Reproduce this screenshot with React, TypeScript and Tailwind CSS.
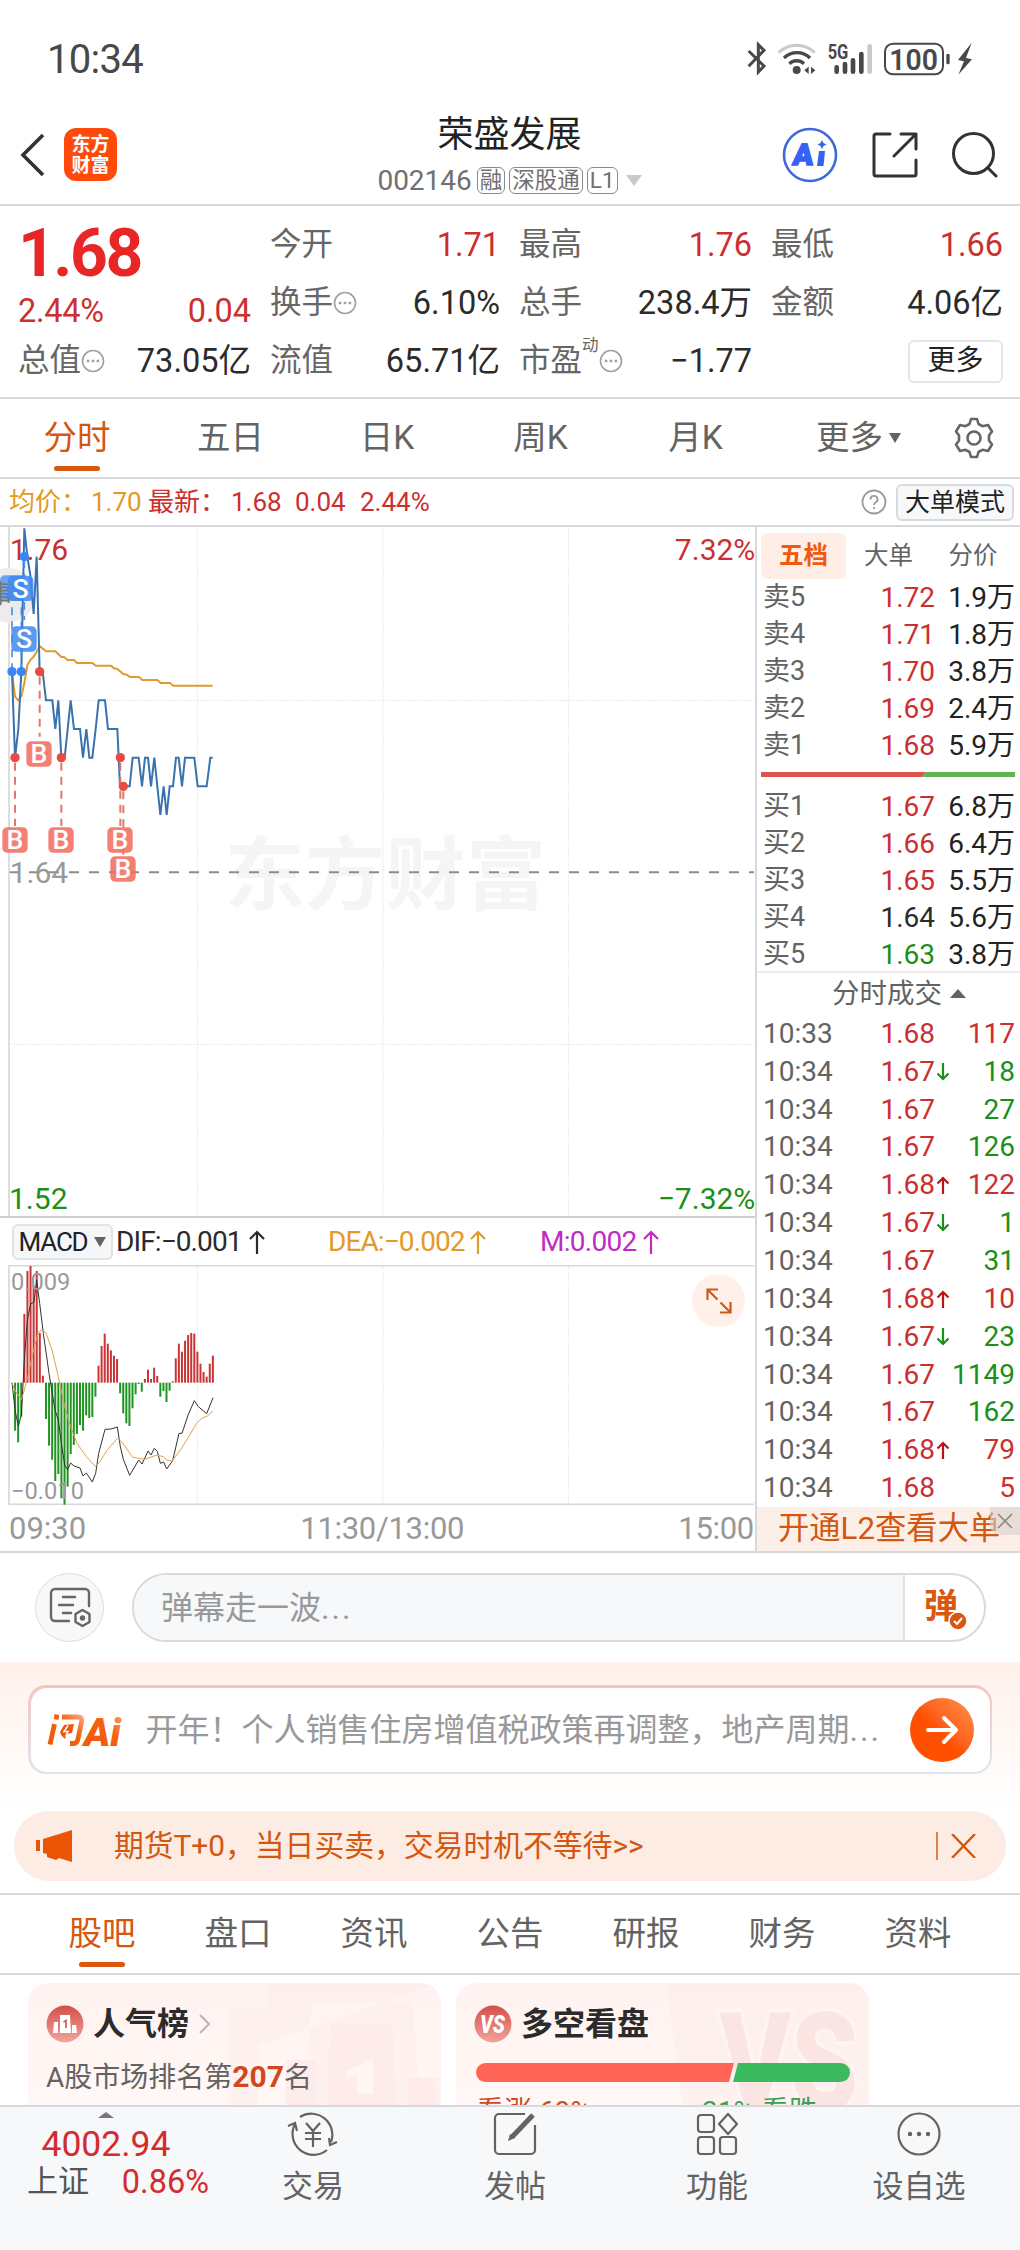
import React from "react";
import { clsx } from "clsx";

const RED = "text-[#cb2f2f]";
const GREEN = "text-[#1a8f1a]";
const DARK = "text-[#2b2b2b]";

const SELL = [
  ["卖5", "1.72", "1.9万"],
  ["卖4", "1.71", "1.8万"],
  ["卖3", "1.70", "3.8万"],
  ["卖2", "1.69", "2.4万"],
  ["卖1", "1.68", "5.9万"],
];

const BUY = [
  ["买1", "1.67", "6.8万"],
  ["买2", "1.66", "6.4万"],
  ["买3", "1.65", "5.5万"],
  ["买4", "1.64", "5.6万"],
  ["买5", "1.63", "3.8万"],
];

// time, price, direction, volume, side
const TRADES = [
  ["10:33", "1.68", "", "117", "b"],
  ["10:34", "1.67", "down", "18", "s"],
  ["10:34", "1.67", "", "27", "s"],
  ["10:34", "1.67", "", "126", "s"],
  ["10:34", "1.68", "up", "122", "b"],
  ["10:34", "1.67", "down", "1", "s"],
  ["10:34", "1.67", "", "31", "s"],
  ["10:34", "1.68", "up", "10", "b"],
  ["10:34", "1.67", "down", "23", "s"],
  ["10:34", "1.67", "", "1149", "s"],
  ["10:34", "1.67", "", "162", "s"],
  ["10:34", "1.68", "up", "79", "b"],
  ["10:34", "1.68", "", "5", "b"],
];

// one value per minute, bars grow from MACD_ZERO
const MACD_ZERO = 608;
const MACD = [
  608, 752, 787, 710, 402, 273, 258, 318, 273, 459, 587, 717, 797, 839, 903, 882, 955, 974, 920, 822, 795, 762, 735,
  752, 706, 714, 711, 650, 557, 498, 461, 491, 511, 527, 537, 640, 700, 730, 738, 685, 643, 612, 635, 597, 569, 597,
  563, 588, 650, 633, 666, 632, 604, 535, 491, 515, 482, 465, 459, 461, 515, 551, 576, 590, 551, 527,
];

const PRICE_LINE =
  "36,455 45,713 55,627 64,455 73,25 82,110 91,165 101,282 110,110 119,455 128,455 138,541 157,541 166,627 175,541 184,713 194,713 203,627 212,541 222,627 240,627 249,713 259,627 268,713 277,713 287,627 296,541 315,541 324,627 352,627 360,799 389,799 398,713 416,713 426,799 435,713 444,713 453,799 463,713 481,885 491,799 500,885 509,799 519,799 528,713 536,713 546,799 555,713 583,713 593,799 620,799 631,713 638,713";
const AVG_LINE =
  "36,455 45,530 55,541 64,530 73,490 82,435 91,420 101,410 110,395 119,378 138,394 166,394 184,411 192,411 203,420 222,420 231,429 277,429 287,437 333,437 342,445 351,446 370,462 380,464 390,471 417,471 427,480 472,480 482,489 510,489 520,497 638,497";
const DIF_LINE =
  "36,608 45,690 55,738 64,705 73,540 82,420 92,372 102,366 110,300 119,370 130,460 147,580 165,690 175,720 184,790 194,855 203,869 212,849 222,858 240,864 249,888 259,879 277,906 287,880 296,820 315,748 333,747 352,741 361,800 370,838 389,886 416,840 426,852 444,813 453,825 463,805 472,814 481,850 491,846 500,867 518,842 537,760 546,760 565,703 583,662 595,680 620,701 639,653";
const DEA_LINE =
  "36,608 45,632 64,659 73,630 82,595 101,510 115,456 126,450 138,459 156,510 175,590 194,680 212,740 231,790 259,830 287,860 300,845 320,812 352,775 365,785 398,832 435,838 470,825 490,830 500,840 516,843 546,803 590,730 605,715 622,708 639,693";

function StatusBar() {
  return (
    <div className="flex h-[120px] items-center justify-between pl-[47px] pr-[46px] text-[#484848]">
      <span className="text-[40px] leading-none tracking-[-0.7px]">10:34</span>
      <svg className="h-[40px] w-[240px]" viewBox="0 8 720 120" fill="none" stroke="#484848" strokeWidth="9">
        <path d="M44 41 90 86 73 104V22l17 17-46 48" />
        <path d="M134 46a76 76 0 0 1 108 0" stroke="#c9c9c9" strokeWidth="9" />
        <path d="M150 62a55 55 0 0 1 78 0M166 79a32 32 0 0 1 44 0" strokeWidth="10" />
        <circle cx="188" cy="98" r="12" fill="#484848" stroke="none" />
        <path d="m224 88v22l-13-11zM231 88v22l13-11z" fill="#484848" stroke="none" />
        <path d="M308 90v13M333 80v23M357 69v34M382 50v53" strokeWidth="14" strokeLinecap="round" />
        <path d="M407 27v76" stroke="#c9c9c9" strokeWidth="14" strokeLinecap="round" />
        <rect x="453" y="19" width="174" height="92" rx="24" strokeWidth="6" />
        <path d="M642 54v22" strokeWidth="10" strokeLinecap="round" />
        <path d="M713 16 672 68l18 4-17 40 41-46-18-4z" fill="#484848" stroke="none" />
        <text x="281" y="64" fontSize="60" fontWeight="700" fill="#484848" stroke="none" textLength="62" lengthAdjust="spacingAndGlyphs">5G</text>
        <text x="466" y="97" fontSize="88" fontWeight="600" fill="#484848" stroke="none" textLength="146" lengthAdjust="spacingAndGlyphs">100</text>
      </svg>
    </div>
  );
}

function Tag({ children }: { children: React.ReactNode }) {
  return (
    <span className="flex h-[27px] items-center rounded-[6px] border-[1.5px] border-[#8a8a8a] px-[2px] text-[22.500px] leading-none">
      {children}
    </span>
  );
}

function Header() {
  return (
    <header className="flex h-[86px] items-center justify-between border-b-2 border-[#d8d8da] pb-[13px] pl-[19px] pr-[22px]">
      <div className="flex w-[218px] items-center gap-[19px] pb-[2px]">
        <svg className="h-[44px] w-[26px]" viewBox="0 0 26 44" fill="none" stroke="#333" strokeWidth="3.6">
          <path d="M24 2 4 22l20 20" />
        </svg>
        <div className="flex h-[53px] w-[53px] flex-col items-center justify-center rounded-[12px] bg-[#ff4a0b] text-[19px] font-bold leading-[21px] text-white">
          <span>东方</span>
          <span>财富</span>
        </div>
      </div>
      <div className="flex flex-col items-center pb-[4px]">
        <h1 className="text-[36px] leading-[44px] text-[#222]">荣盛发展</h1>
        <div className="mt-[10px] flex items-center gap-[4px] text-[#707070]">
          <span className="mr-px text-[28px] leading-[28px]">002146</span>
          <Tag>融</Tag>
          <Tag>深股通</Tag>
          <Tag>L1</Tag>
          <span className="ml-[4px] border-x-[8px] border-t-[11px] border-x-transparent border-t-[#c9c9c9]" />
        </div>
      </div>
      <div className="flex w-[216px] items-center justify-end gap-[34px] pb-[2px]">
        <svg className="h-[56px] w-[56px]" viewBox="0 0 56 56">
          <circle cx="28" cy="28" r="26" fill="none" stroke="#4168d8" strokeWidth="2.6" />
          <text x="11" y="38.500" fontSize="30" fontWeight="900" fill="#3562f5" stroke="#3562f5" strokeWidth="1.500" transform="skewX(-6) translate(3 0)">A</text>
          <path d="M37 24h6l-1.500 15h-6.500z" fill="#3562f5" />
          <path d="m40 13 1.500 3 3 1.500-3 1.500-1.500 3-1.500-3-3-1.500 3-1.500z" fill="#3562f5" />
        </svg>
        <svg className="h-[46px] w-[46px]" viewBox="0 0 46 46" fill="none" stroke="#333" strokeWidth="3" strokeLinecap="round" strokeLinejoin="round">
          <path d="M18 2H4a2 2 0 0 0-2 2v38a2 2 0 0 0 2 2h38a2 2 0 0 0 2-2V28M29 2h15v15M44 2 22 24" />
        </svg>
        <svg className="h-[46px] w-[46px]" viewBox="0 0 46 46" fill="none" stroke="#333" strokeWidth="3" strokeLinecap="round">
          <circle cx="21.500" cy="21.500" r="20" />
          <path d="m36 36 8 8" />
        </svg>
      </div>
    </header>
  );
}

function InfoDots() {
  return (
    <svg className="h-[24px] w-[24px]" viewBox="0 0 24 24" fill="none" stroke="#a0a0a0" strokeWidth="1.600">
      <circle cx="12" cy="12" r="10.500" />
      <path d="M5.800 12h2.600M10.700 12h2.600M15.600 12h2.600" strokeWidth="2.400" />
    </svg>
  );
}

function Stat({ label, value, color = DARK, dots, sup }: { label: string; value: string; color?: string; dots?: boolean; sup?: string }) {
  return (
    <div className="flex h-[58px] items-center justify-between">
      <div className="flex items-center text-[31.500px] leading-none text-[#666]">
        {label}
        {sup && <span className="-mt-[30px] text-[16.500px]">{sup}</span>}
        {dots && <InfoDots />}
      </div>
      <span className={clsx("-mr-[2px] text-[32.500px] leading-none", color)}>{value}</span>
    </div>
  );
}

function Quote() {
  return (
    <section className="grid h-[193px] grid-cols-[231px_228px_231px_230px] gap-x-[21px] border-b-2 border-[#d8d8da] pl-[18px] pt-[10px]">
      <div>
        <div className="flex h-[75px] items-center text-[66px] font-bold leading-none tracking-[-2.500px] text-[#e92626]">1.68</div>
        <div className={clsx("flex h-[41px] items-center justify-between text-[32.500px] leading-none", RED)}>
          <span className="tracking-[-0.300px]">2.44%</span>
          <span className="-mr-[2px]">0.04</span>
        </div>
        <Stat label="总值" value="73.05亿" dots />
      </div>
      <div>
        <Stat label="今开" value="1.71" color={RED} />
        <Stat label="换手" value="6.10%" dots />
        <Stat label="流值" value="65.71亿" />
      </div>
      <div>
        <Stat label="最高" value="1.76" color={RED} />
        <Stat label="总手" value="238.4万" />
        <Stat label="市盈" value="−1.77" sup="动" dots />
      </div>
      <div>
        <Stat label="最低" value="1.66" color={RED} />
        <Stat label="金额" value="4.06亿" />
        <div className="flex h-[58px] items-center justify-end">
          <button className="-mr-[2px] h-[43px] w-[95px] rounded-[6px] border-2 border-[#e6e6e8] text-[28px] leading-none text-[#222]">更多</button>
        </div>
      </div>
    </section>
  );
}

function PeriodTabs() {
  return (
    <nav className="flex h-[80px] items-center border-b-2 border-[#d8d8da] text-[33.500px] leading-none text-[#636363]">
      <div className="relative flex h-full w-[154px] items-center justify-center text-[#d4570f]">
        分时
        <span className="absolute bottom-[6px] h-[5px] w-[46px] rounded-full bg-[#d9570e]" />
      </div>
      <div className="w-[153px] text-center">五日</div>
      <div className="w-[160px] text-center">日K</div>
      <div className="w-[147px] text-center">周K</div>
      <div className="w-[163px] text-center">月K</div>
      <div className="flex w-[163px] items-center justify-center gap-[6px]">
        更多
        <span className="border-x-[6px] border-t-[10px] border-x-transparent border-t-[#636363]" />
      </div>
      <svg className="ml-[13px] h-[42px] w-[42px]" viewBox="0 0 42 42" fill="none" stroke="#666" strokeWidth="2.600" strokeLinejoin="round">
        <path d="M18 2h6l1.500 5 4 2.200 5.500-1.200 4 6.500-3 4v5l3 4-4 6.500-5.500-1.200-4 2.200L24 40h-6l-1.500-5-4-2.200L7 34l-4-6.500 3-4v-5l-3-4L7 8l5.500 1.200 4-2.200z" />
        <circle cx="21" cy="21" r="6.500" />
      </svg>
    </nav>
  );
}

function InfoRow() {
  return (
    <div className="flex h-[48px] items-center border-b-2 border-[#d8d8da] pl-[9px] pr-[6px] text-[26px] leading-none">
      <span className="w-[82px] text-[#e29a22]">均价：</span>
      <span className="w-[57px] text-[#e29a22]">1.70</span>
      <span className={clsx("w-[83px]", RED)}>最新：</span>
      <span className={clsx("w-[64px]", RED)}>1.68</span>
      <span className={clsx("w-[65px]", RED)}>0.04</span>
      <span className={RED}>2.44%</span>
      <svg className="ml-auto h-[26px] w-[26px]" viewBox="0 0 26 26" fill="none" stroke="#999" strokeWidth="1.800">
        <circle cx="13" cy="13" r="11.500" />
        <path d="M9.500 10.500a3.500 3.500 0 1 1 5 3c-1 .6-1.500 1-1.500 2.500M13 18v2" />
      </svg>
      <button className="ml-[9px] h-[37px] w-[118px] rounded-[6px] border-2 border-[#d9dadd] bg-[#f7f8fa] text-[25px] leading-none text-[#222]">大单模式</button>
    </div>
  );
}

function Marker({ x, y, kind }: { x: number; y: number; kind: "B" | "S" }) {
  return (
    <g>
      <rect x={x - 38} y={y - 38} width="76" height="76" rx="14" fill={kind === "B" ? "#f26a5a" : "#3f88ee"} fillOpacity="0.85" />
      <text x={x} y={y + 28} textAnchor="middle" fontSize="80" fontWeight="500" fill="#fff">{kind}</text>
    </g>
  );
}

function PriceChart() {
  return (
    <svg className="block h-[689px] w-[755px]" viewBox="0 21 2265 2067" fill="none">
      <text x="674" y="1148" fontSize="240" fontWeight="700" fill="#f5f5f6" textLength="964">东方财富</text>
      <g stroke="#dcdcdc" strokeWidth="3" strokeDasharray="3 4">
        <path d="M592 18v2073M1149 18v2073M1705 18v2073M27 541h2235M27 1573h2235" />
      </g>
      <path d="M27 1057h2235" stroke="#8c8c8c" strokeWidth="6" strokeDasharray="30 30" />
      <path d="M27 18v2073" stroke="#d8d8da" strokeWidth="5" />
      <circle cx="25" cy="226" r="82" fill="#ececec" />
      <g fontSize="90">
        <text x="29" y="119" fill="#cb2f2f">1.76</text>
        <text x="2266" y="119" fill="#cb2f2f" textAnchor="end">7.32%</text>
        <text x="29" y="1090" fill="#999">1.64</text>
        <text x="27" y="2066" fill="#1a8f1a">1.52</text>
        <text x="2266" y="2066" fill="#1a8f1a" textAnchor="end">−7.32%</text>
      </g>
      <polyline points={AVG_LINE} stroke="#e09a2c" strokeWidth="6" />
      <polyline points={PRICE_LINE} stroke="#3a72ae" strokeWidth="6" />
      <g stroke="#4a90f0" strokeWidth="5" strokeDasharray="24 18">
        <path d="M36 262v190M64 262v190M73 120v180" />
      </g>
      <g stroke="#e2776b" strokeWidth="6" strokeDasharray="24 18">
        <path d="M119 470v180M45 728v190M184 728v190M361 728v190M370 814v190" />
      </g>
      <g fill="#ea4a3f">
        <circle cx="119" cy="455" r="14" />
        <circle cx="45" cy="713" r="14" />
        <circle cx="184" cy="713" r="14" />
        <circle cx="361" cy="713" r="14" />
        <circle cx="370" cy="799" r="14" />
      </g>
      <g fill="#3a86f4">
        <circle cx="36" cy="455" r="14" />
        <circle cx="64" cy="455" r="14" />
        <circle cx="73" cy="110" r="14" />
      </g>
      <rect x="0" y="166" width="76" height="76" rx="14" fill="#4a90f0" fillOpacity="0.8" />
      <text x="-36" y="250" fontSize="76" fill="#777">事</text>
      <Marker x={62} y={205} kind="S" />
      <Marker x={72} y={357} kind="S" />
      <Marker x={45} y={960} kind="B" />
      <Marker x={117} y={702} kind="B" />
      <Marker x={183} y={960} kind="B" />
      <Marker x={360} y={960} kind="B" />
      <Marker x={369} y={1047} kind="B" />
    </svg>
  );
}

function ArrowUp() {
  return (
    <svg className="h-[24px] w-[16px]" viewBox="0 0 16 24" fill="none" stroke="currentColor" strokeWidth="2.200">
      <path d="M8 24V2M1 9l7-7 7 7" />
    </svg>
  );
}

function MacdPanel() {
  return (
    <>
      <div className="flex h-[49px] items-center border-t-2 border-[#d0d0d2] pl-[12px] text-[28px] leading-none">
        <div className="flex h-[36px] w-[101px] items-center justify-center gap-[7px] rounded-[6px] border-2 border-[#e2e3e6] bg-[#f6f7f9] text-[26px] tracking-[-1.200px] text-[#222]">
          MACD
          <span className="border-x-[6px] border-t-[10px] border-x-transparent border-t-[#636363]" />
        </div>
        <div className="ml-[3px] flex w-[212px] items-center gap-[7px] tracking-[-0.900px] text-[#2b2b2b]">DIF:−0.001<ArrowUp /></div>
        <div className="flex w-[212px] items-center gap-[5px] tracking-[-0.900px] text-[#e29a2c]">DEA:−0.002<ArrowUp /></div>
        <div className="flex items-center gap-[6px] tracking-[-0.700px] text-[#c02bc4]">M:0.002<ArrowUp /></div>
      </div>
      <div className="relative">
        <svg className="block h-[240px] w-[755px]" viewBox="0 255 2265 720" fill="none">
          <path d="M27 257h2235M27 973h2235" stroke="#d8d8da" strokeWidth="5" />
          <path d="M27 255v720" stroke="#d8d8da" strokeWidth="5" />
          <path d="M592 255v720M1149 255v720M1705 255v720" stroke="#dcdcdc" strokeWidth="3" strokeDasharray="3 4" />
          {MACD.map((y, i) => (
            <rect key={i} x={33 + i * 9.27} y={Math.min(y, MACD_ZERO)} width="6" height={Math.abs(y - MACD_ZERO)} fill={y < MACD_ZERO ? "#c93434" : "#1f9420"} />
          ))}
          <polyline points={DIF_LINE} stroke="#333" strokeWidth="3" />
          <polyline points={DEA_LINE} stroke="#e2a04a" strokeWidth="3" />
          <g fontSize="71" fill="#999">
            <text x="33" y="330">0.009</text>
            <text x="33" y="957">−0.010</text>
          </g>
        </svg>
        <button className="absolute right-[10px] top-[9px] flex h-[53px] w-[53px] items-center justify-center rounded-full bg-[#fff1ea]">
          <svg className="h-[26px] w-[26px]" viewBox="0 0 26 26" fill="none" stroke="#d05a18" strokeWidth="2.200">
            <path d="M12 1.500H1.500V12M1.500 1.500l10 10M14 24.500h10.500V14M24.500 24.500l-10-10" />
          </svg>
        </button>
      </div>
      <div className="flex h-[46px] items-center justify-between pl-[9px] pr-px text-[31px] leading-none text-[#999]">
        <span>09:30</span>
        <span className="tracking-[-0.300px]">11:30/13:00</span>
        <span className="tracking-[-0.300px]">15:00</span>
      </div>
    </>
  );
}

function BookRow({ row }: { row: string[] }) {
  const [label, price, volume] = row;
  const color = price === "1.64" ? DARK : Number(price) > 1.64 ? RED : GREEN;
  return (
    <div className="flex h-[37px] items-center pl-[6px] pr-[5px] text-[28px] leading-none">
      <span className="w-[116px] text-[27px] text-[#636363]">{label}</span>
      <span className={clsx("w-[56px] text-right", color)}>{price}</span>
      <span className="ml-auto text-[#222]">{volume}</span>
    </div>
  );
}

function TradeRow({ row }: { row: string[] }) {
  const [time, price, dir, volume, side] = row;
  return (
    <div className="flex h-[37.850px] items-center pl-[6px] pr-[5px] text-[28px] leading-none">
      <span className="w-[116px] text-[#636363]">{time}</span>
      <span className={clsx("w-[56px] text-right", RED)}>{price}</span>
      {dir && (
        <svg className={clsx("ml-px h-[18px] w-[14px]", dir === "up" ? "text-[#b81414]" : GREEN)} viewBox="0 0 14 18" fill="none" stroke="currentColor" strokeWidth="2.200">
          <path d={dir === "up" ? "M7 18V2M1.500 7.500 7 2l5.500 5.500" : "M7 0v16M1.500 10.500 7 16l5.500-5.500"} />
        </svg>
      )}
      <span className={clsx("ml-auto", side === "b" ? RED : GREEN)}>{volume}</span>
    </div>
  );
}

function OrderBook() {
  return (
    <aside className="flex h-[1024px] w-[265px] flex-col border-l-2 border-[#d8d8da]">
      <div className="flex h-[52px] shrink-0 items-end pl-[4px] text-[24.500px] leading-none text-[#636363]">
        <div className="flex h-[46px] w-[85px] items-center justify-center rounded-[6px] bg-[#ffeee6] font-bold text-[#ee5a10]">五档</div>
        <div className="flex h-[46px] w-[85px] items-center justify-center">大单</div>
        <div className="flex h-[46px] w-[84px] items-center justify-center">分价</div>
      </div>
      <div>{SELL.map((r) => <BookRow key={r[0]} row={r} />)}</div>
      <svg className="ml-[4px] mt-[8px] h-[5px] w-[254px] shrink-0" viewBox="0 0 254 5">
        <path d="M0 0h165l-4 5H0z" fill="#d9534f" />
        <path d="M165 0h89v5h-93z" fill="#60b453" />
      </svg>
      <div className="mt-[11px] h-[185px] shrink-0 border-b-2 border-[#ececee]">{BUY.map((r) => <BookRow key={r[0]} row={r} />)}</div>
      <div className="flex h-[41px] shrink-0 items-center justify-center gap-[8px] pl-[21px] text-[27.500px] leading-none text-[#636363]">
        分时成交
        <span className="border-x-[8px] border-b-[9px] border-x-transparent border-b-[#636363]" />
      </div>
      <div className="pt-px">{TRADES.map((r, i) => <TradeRow key={i} row={r} />)}</div>
      <div className="relative mt-auto flex h-[44px] shrink-0 items-center bg-[#fcefe8] pl-[21px] text-[31.300px] leading-none text-[#d4570f]">
        开通L2查看大单
        <span className="absolute right-0 top-0 flex h-[28px] w-[30px] items-center justify-center rounded-bl-[10px] bg-[#d9cfca]/60">
          <svg className="h-[16px] w-[16px]" viewBox="0 0 16 16" stroke="#8d8885" strokeWidth="1.600">
            <path d="m1 1 14 14M15 1 1 15" />
          </svg>
        </span>
      </div>
    </aside>
  );
}

function Danmaku() {
  return (
    <div className="flex h-[111px] items-center border-t-2 border-[#d8d8da] pl-[35px]">
      <div className="flex h-[69px] w-[69px] items-center justify-center rounded-full border-[1.5px] border-[#dcdde0] bg-[#f7f8fa]">
        <svg className="h-[42px] w-[42px]" viewBox="0 0 42 42" fill="none" stroke="#666" strokeWidth="2.400" strokeLinecap="round">
          <path d="M20 34H6a4 4 0 0 1-4-4V6a4 4 0 0 1 4-4h30a4 4 0 0 1 4 4v13" />
          <path d="M14 10h12M10 18h14M14 26h8" />
          <path d="m33.500 23 7 4v8l-7 4-7-4v-8z" strokeLinejoin="round" />
          <circle cx="33.500" cy="31" r="1.500" fill="#666" />
        </svg>
      </div>
      <div className="ml-[28px] flex h-[69px] w-[854px] overflow-hidden rounded-full border-2 border-[#d9dadd] bg-white">
        <div className="flex flex-1 items-center bg-[#f7f8fa] pl-[27px] text-[32px] leading-none text-[#999]">
          弹幕走一波<span className="tracking-[2px]">...</span>
        </div>
        <div className="relative w-[81px] border-l-2 border-[#e0e1e4] pl-[19px] text-[34px] font-bold leading-[62px] text-[#d9570e]">
          弹
          <svg className="absolute left-[43px] top-[36px] h-[20px] w-[20px]" viewBox="0 0 20 20" fill="none">
            <circle cx="10" cy="10" r="9" fill="#d9570e" stroke="#fff" strokeWidth="1.500" />
            <path d="m6 10 3 3 5-6" stroke="#fff" strokeWidth="2" />
          </svg>
        </div>
      </div>
    </div>
  );
}

function AskAi() {
  return (
    <div className="h-[149px] bg-linear-to-b from-[#fff1eb] to-white px-[28px] pt-[23px]">
      <div className="h-[89px] rounded-[18px] bg-linear-to-b from-[#f3c6be] to-[#dfe4f0] p-[2.500px]">
        <div className="flex h-full items-center rounded-[16px] bg-white pl-[15px] pr-[16px]">
          <svg className="h-[40px] w-[80px] overflow-visible" viewBox="0 0 80 40">
            <defs>
              <linearGradient id="ask" x1="0" x2="1" y1="1" y2="0">
                <stop offset="0" stopColor="#f4570a" />
                <stop offset="0.6" stopColor="#f2600f" />
                <stop offset="1" stopColor="#ffa37e" />
              </linearGradient>
            </defs>
            <g fill="none" stroke="url(#ask)" strokeWidth="4.800">
              <path d="M8.500 14 4 34.500M11 4.500l-1 5M16 7h16q4.500 0 3.500 5l-3.500 17q-1 4.500-4 4.500h-4" />
            </g>
            <path d="m18 15 10-1-2 9-5 1-2 5-4-4-1-3z" fill="#f4570a" />
            <path d="m22 15.500-4 6h4l-2.500 5" fill="none" stroke="#fff" strokeWidth="1.500" />
            <text x="38" y="35.500" fontSize="39" fontWeight="900" fontStyle="italic" fill="url(#ask)" textLength="37" lengthAdjust="spacingAndGlyphs">Ai</text>
          </svg>
          <span className="ml-[20px] flex-1 whitespace-nowrap text-[32px] leading-none text-[#999]">
            开年！个人销售住房增值税政策再调整，地产周期<span className="tracking-[2px]">...</span>
          </span>
          <div className="flex h-[64px] w-[64px] items-center justify-center rounded-full bg-linear-to-tr from-[#ff5000] from-45% to-[#ff9348]">
            <svg className="h-[32px] w-[32px]" viewBox="0 0 32 32" fill="none" stroke="#fff" strokeWidth="4" strokeLinecap="round" strokeLinejoin="round">
              <path d="M2 16h27M18 4l12 12-12 12" />
            </svg>
          </div>
        </div>
      </div>
    </div>
  );
}

function Notice() {
  return (
    <div className="mx-[14px] mb-[12px] flex h-[70px] items-center rounded-full bg-[#fcece3] pl-[22px] pr-[30px] text-[#d4570f]">
      <svg className="h-[32px] w-[36px]" viewBox="0 0 36 32" fill="#e95504">
        <path d="M0 10h4v11H0zM7 9 36 0v32l-13-4-3 2-9-3v-3l-4-1z" />
      </svg>
      <span className="ml-[42px] text-[29.800px] leading-none">期货T+0，当日买卖，交易时机不等待&gt;&gt;</span>
      <span className="ml-auto h-[28px] w-[2px] bg-[#d9824f]" />
      <svg className="ml-[13px] h-[24px] w-[25px]" viewBox="0 0 25 24" stroke="#d4570f" strokeWidth="2.400">
        <path d="m1 0 23 24M24 0 1 24" />
      </svg>
    </div>
  );
}

function ContentTabs() {
  const tabs = ["股吧", "盘口", "资讯", "公告", "研报", "财务", "资料"];
  return (
    <nav className="flex h-[82px] items-center border-y-2 border-[#d8d8da] px-[34px] text-[33.500px] leading-none text-[#636363]">
      {tabs.map((t, i) => (
        <div key={t} className={clsx("relative flex h-full w-[136px] items-center justify-center", i === 0 && "text-[#d4570f]")}>
          {t}
          {i === 0 && <span className="absolute bottom-[6px] h-[5px] w-[46px] rounded-full bg-[#d9570e]" />}
        </div>
      ))}
    </nav>
  );
}

function Cards() {
  return (
    <div className="flex h-[130px] gap-[15px] overflow-hidden pl-[28px] pt-[8px]">
      <div className="relative h-[180px] w-[413px] overflow-hidden rounded-[20px] bg-linear-to-b from-[#fff3f1] to-[#fffaf8] px-[18px] pt-[22px]">
        <svg className="absolute right-0 top-0 h-[180px] w-[213px]" viewBox="0 0 213 180" fill="#fdeceb">
          <path d="M40 0h173v180H0V25h38zM31 62v118h27V77h21l5-58h101l5 75h23V0z" fillOpacity="0.450" fillRule="evenodd" />
          <path d="M102 41h63l6 139H97zM59 77h30l-2 103H55zM180 95h27l6 85h-33z" />
          <path d="M119 88l26-12v35h-16V92l-10 3z" fill="#fff6f4" />
        </svg>
        <div className="relative flex h-[38px] items-center">
          <svg className="h-[38px] w-[38px]" viewBox="0 0 38 38">
            <defs>
              <linearGradient id="badge" x1="0" x2="0" y1="0" y2="1">
                <stop offset="0" stopColor="#d34f4a" />
                <stop offset="1" stopColor="#f2a39c" />
              </linearGradient>
            </defs>
            <circle cx="19" cy="19" r="18.500" fill="url(#badge)" />
            <path d="M8 17h4v11H7zM14 10h10l1 18H14zM26 20h4l1 8h-5z" fill="#fff" />
            <path d="m17.500 17 2.500-1.500V23" stroke="#d9625c" strokeWidth="1.800" fill="none" />
          </svg>
          <h3 className="ml-[9px] text-[32px] font-bold leading-none text-[#2b2b2b]">人气榜</h3>
          <svg className="ml-[10px] h-[20px] w-[12px]" viewBox="0 0 12 20" fill="none" stroke="#b5b5b5" strokeWidth="2">
            <path d="m1 1 9 9-9 9" />
          </svg>
        </div>
        <p className="relative mt-[16px] text-[28px] leading-[36px] text-[#636363]">
          A股市场排名第<b className="text-[30px] text-[#d0491e]">207</b>名
        </p>
      </div>
      <div className="relative h-[180px] w-[413px] overflow-hidden rounded-[20px] bg-linear-to-b from-[#fff3f1] to-[#fffaf8] px-[18px] pt-[22px]">
        <svg className="absolute right-0 top-0 h-[180px] w-[203px]" viewBox="0 0 203 180">
          <path d="M0 0h203v180H24z" fill="#fdeceb" fillOpacity="0.600" />
          <text x="54" y="126" fontSize="135" fontWeight="900" fill="#fbe5e3" stroke="#fff4f2" strokeWidth="8" paintOrder="stroke" textLength="138" lengthAdjust="spacingAndGlyphs">VS</text>
        </svg>
        <div className="relative flex h-[38px] items-center">
          <svg className="h-[38px] w-[38px]" viewBox="0 0 38 38">
            <circle cx="19" cy="19" r="18.500" fill="url(#badge)" />
            <text x="6" y="28" fontSize="25" fontWeight="900" fontStyle="italic" fill="#fff" textLength="25" lengthAdjust="spacingAndGlyphs">VS</text>
          </svg>
          <h3 className="ml-[9px] text-[32px] font-bold leading-none text-[#2b2b2b]">多空看盘</h3>
        </div>
        <svg className="relative ml-[2px] mt-[20px] block h-[19px] w-[374px]" viewBox="0 0 374 19">
          <path d="M9.500 0H258l-5 19H9.500a9.500 9.500 0 0 1 0-19z" fill="#ff6456" />
          <path d="M262 0h102.500a9.500 9.500 0 0 1 0 19H257z" fill="#3cba60" />
        </svg>
        <div className="relative mt-[14px] flex justify-between pl-[2px] pr-[34px] text-[28px] leading-[32px]">
          <span className="text-[#cc4a26]">看涨 69%</span>
          <span className="text-[#3b9e58]">31% 看跌</span>
        </div>
      </div>
    </div>
  );
}

function NavItem({ label, children }: { label: string; children: React.ReactNode }) {
  return (
    <div className="flex w-[202px] flex-col items-center pt-[4px] text-[31px] leading-none text-[#636363]">
      <svg className="h-[46px] w-[52px]" viewBox="0 0 52 46" fill="none" stroke="#636363" strokeWidth="2.200">
        {children}
      </svg>
      <span className="mt-[14px]">{label}</span>
    </div>
  );
}

function BottomNav() {
  return (
    <footer className="flex h-[145px] border-t-2 border-[#d8d8da] bg-[#f7f8fa]">
      <div className="flex w-[212px] flex-col items-center pt-[5px] leading-none">
        <span className="border-x-[8px] border-b-[6px] border-x-transparent border-b-[#77777a]" />
        <span className="mt-[8px] text-[35.500px] leading-[36px] text-[#d42c2c]">4002.94</span>
        <div className="ml-[24px] mt-[4px] flex w-[182px] items-center justify-between">
          <span className="text-[31px] leading-[32px] text-[#555]">上证</span>
          <span className="text-[32.500px] leading-[32px] text-[#d42c2c]">0.86%</span>
        </div>
      </div>
      <NavItem label="交易">
        <path d="M13 6a21 21 0 0 1 31 25M40 39A21 21 0 0 1 8 13M1 15l7-3 2 8M42 27l1 7 7-3M19 12l7 8 7-8M26 20v16M18 22h16M18 28h16" />
      </NavItem>
      <NavItem label="发帖">
        <path d="M36 3H10a4 4 0 0 0-4 4v32a4 4 0 0 0 4 4h32a4 4 0 0 0 4-4V14" />
        <path d="M44 4 23 26" strokeWidth="5" />
        <path d="m21 23-2 7 7-3z" fill="#636363" stroke="none" />
      </NavItem>
      <NavItem label="功能">
        <rect x="7" y="4" width="16" height="17" rx="3" />
        <rect x="7" y="26" width="16" height="17" rx="3" />
        <rect x="29" y="26" width="16" height="17" rx="3" />
        <path d="m37 3 9 10-9 10-9-10z" strokeLinejoin="round" />
      </NavItem>
      <NavItem label="设自选">
        <circle cx="26" cy="23" r="20.500" />
        <g fill="#636363" stroke="none">
          <circle cx="17" cy="23" r="2.200" />
          <circle cx="26" cy="23" r="2.200" />
          <circle cx="35" cy="23" r="2.200" />
        </g>
      </NavItem>
    </footer>
  );
}

export default function App() {
  return (
    <div className="h-[2250px] w-[1020px] overflow-hidden bg-white font-[Roboto,'Noto_Sans_CJK_SC',sans-serif]">
      <StatusBar />
      <Header />
      <Quote />
      <PeriodTabs />
      <InfoRow />
      <div className="flex">
        <div className="w-[755px]">
          <PriceChart />
          <MacdPanel />
        </div>
        <OrderBook />
      </div>
      <Danmaku />
      <AskAi />
      <Notice />
      <ContentTabs />
      <Cards />
      <BottomNav />
    </div>
  );
}
